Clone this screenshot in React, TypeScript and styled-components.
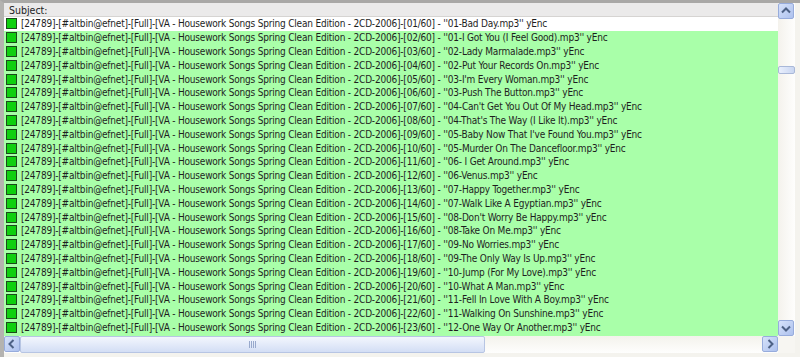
import React from 'react';
import styled, { createGlobalStyle } from 'styled-components';

const titles = [
  '01-Bad Day.mp3',
  '01-I Got You (I Feel Good).mp3',
  '02-Lady Marmalade.mp3',
  '02-Put Your Records On.mp3',
  "03-I'm Every Woman.mp3",
  '03-Push The Button.mp3',
  "04-Can't Get You Out Of My Head.mp3",
  "04-That's The Way (I Like It).mp3",
  "05-Baby Now That I've Found You.mp3",
  '05-Murder On The Dancefloor.mp3',
  '06- I Get Around.mp3',
  '06-Venus.mp3',
  '07-Happy Together.mp3',
  '07-Walk Like A Egyptian.mp3',
  "08-Don't Worry Be Happy.mp3",
  '08-Take On Me.mp3',
  '09-No Worries.mp3',
  '09-The Only Way Is Up.mp3',
  '10-Jump (For My Love).mp3',
  '10-What A Man.mp3',
  '11-Fell In Love With A Boy.mp3',
  '11-Walking On Sunshine.mp3',
  '12-One Way Or Another.mp3',
  '12-Sunshine After The Rain.mp3',
];

const pad = (n: number) => String(n).padStart(2, '0');

const GlobalStyle = createGlobalStyle`
  html, body {
    margin: 0;
    padding: 0;
    background: #f4f3ee;
  }
`;

const Window = styled.div`
  width: 800px;
  height: 357px;
  box-sizing: border-box;
  border-top: 3px solid #a9a8a6;
  border-left: 4px solid #b4b3b0;
  padding-right: 5px;
  padding-bottom: 4px;
  background: #f4f3ee;
  display: grid;
  grid-template-columns: minmax(0, 1fr) 17px;
  grid-template-rows: minmax(0, 1fr) 17px;
  font-family: 'DejaVu Sans Condensed', 'Liberation Sans', sans-serif;
  overflow: hidden;
`;

const ListArea = styled.div`
  overflow: hidden;
  background: #ffffff;
  display: flex;
  flex-direction: column;
`;

const Header = styled.div`
  height: 14px;
  flex: none;
  background: #ebeaea;
  border-bottom: 1px solid #d6d4d2;
  box-sizing: border-box;
  display: flex;
  align-items: center;
  padding-left: 5px;
  font-size: 10.5px;
  color: #222;
`;

const Row = styled.div<{ $green: boolean }>`
  height: 13.8px;
  flex: none;
  display: flex;
  align-items: center;
  background: ${(p) => (p.$green ? '#a9ffa9' : '#ffffff')};
  white-space: nowrap;
  font-size: 10px;
  letter-spacing: -0.2px;
  color: #1e1e1e;
`;

const Check = styled.span`
  width: 9px;
  height: 9px;
  margin: 0 4px 0 2px;
  flex: none;
  background: #10d010;
  border: 1px solid #1c4a1c;
`;

const VScroll = styled.div`
  display: flex;
  flex-direction: column;
  background: linear-gradient(90deg, #f4f2ec, #fefefd);
`;

const HScroll = styled.div`
  display: flex;
  align-items: stretch;
  background: linear-gradient(180deg, #f4f2ec, #fefefd);
`;

const Corner = styled.div`
  background: #f7f6f2;
`;

const ArrowButton = styled.div`
  width: 16px;
  height: 16px;
  flex: none;
  box-sizing: border-box;
  border: 1px solid #97acdc;
  border-radius: 2px;
  background: linear-gradient(135deg, #d6e2fa, #adc1ee);
  display: flex;
  align-items: center;
  justify-content: center;
`;

const Track = styled.div`
  flex: 1;
  display: flex;
  flex-direction: column;
`;

const VThumb = styled.div`
  margin-top: 47px;
  height: 8px;
  box-sizing: border-box;
  border: 1px solid #a9b8d8;
  border-radius: 2px;
  background: linear-gradient(90deg, #e9effc, #c9d6f1);
`;

const HThumb = styled.div`
  width: 465px;
  flex: none;
  box-sizing: border-box;
  border: 1px solid #b7c5e3;
  border-radius: 2px;
  background: linear-gradient(180deg, #f3f6fd, #d3def5);
  display: flex;
  align-items: center;
  justify-content: center;
`;

const Grip = styled.div`
  width: 7px;
  height: 7px;
  background: repeating-linear-gradient(90deg, #98a9cc 0 1px, transparent 1px 2px);
`;

const HTrack = styled.div`
  flex: 1;
`;

const Arrow = ({ dir }: { dir: 'up' | 'down' | 'left' | 'right' }) => {
  const d = {
    up: 'M4 9.5 L8 5.5 L12 9.5',
    down: 'M4 6.5 L8 10.5 L12 6.5',
    left: 'M9.5 4 L5.5 8 L9.5 12',
    right: 'M6.5 4 L10.5 8 L6.5 12',
  }[dir];
  return (
    <svg width="14" height="14" viewBox="1 1 14 14">
      <path d={d} fill="none" stroke="#4d6185" strokeWidth="2" />
    </svg>
  );
};

export default function App() {
  return (
    <>
      <GlobalStyle />
      <Window>
        <ListArea>
          <Header>Subject:</Header>
          {titles.map((t, i) => (
            <Row key={i} $green={i > 0}>
              <Check />
              {`[24789]-[#altbin@efnet]-[Full]-[VA - Housework Songs Spring Clean Edition - 2CD-2006]-[${pad(
                i + 1
              )}/60] - ''${t}'' yEnc`}
            </Row>
          ))}
        </ListArea>
        <VScroll>
          <ArrowButton>
            <Arrow dir="up" />
          </ArrowButton>
          <Track>
            <VThumb />
          </Track>
          <ArrowButton>
            <Arrow dir="down" />
          </ArrowButton>
        </VScroll>
        <HScroll>
          <ArrowButton>
            <Arrow dir="left" />
          </ArrowButton>
          <HThumb>
            <Grip />
          </HThumb>
          <HTrack />
          <ArrowButton>
            <Arrow dir="right" />
          </ArrowButton>
        </HScroll>
        <Corner />
      </Window>
    </>
  );
}
